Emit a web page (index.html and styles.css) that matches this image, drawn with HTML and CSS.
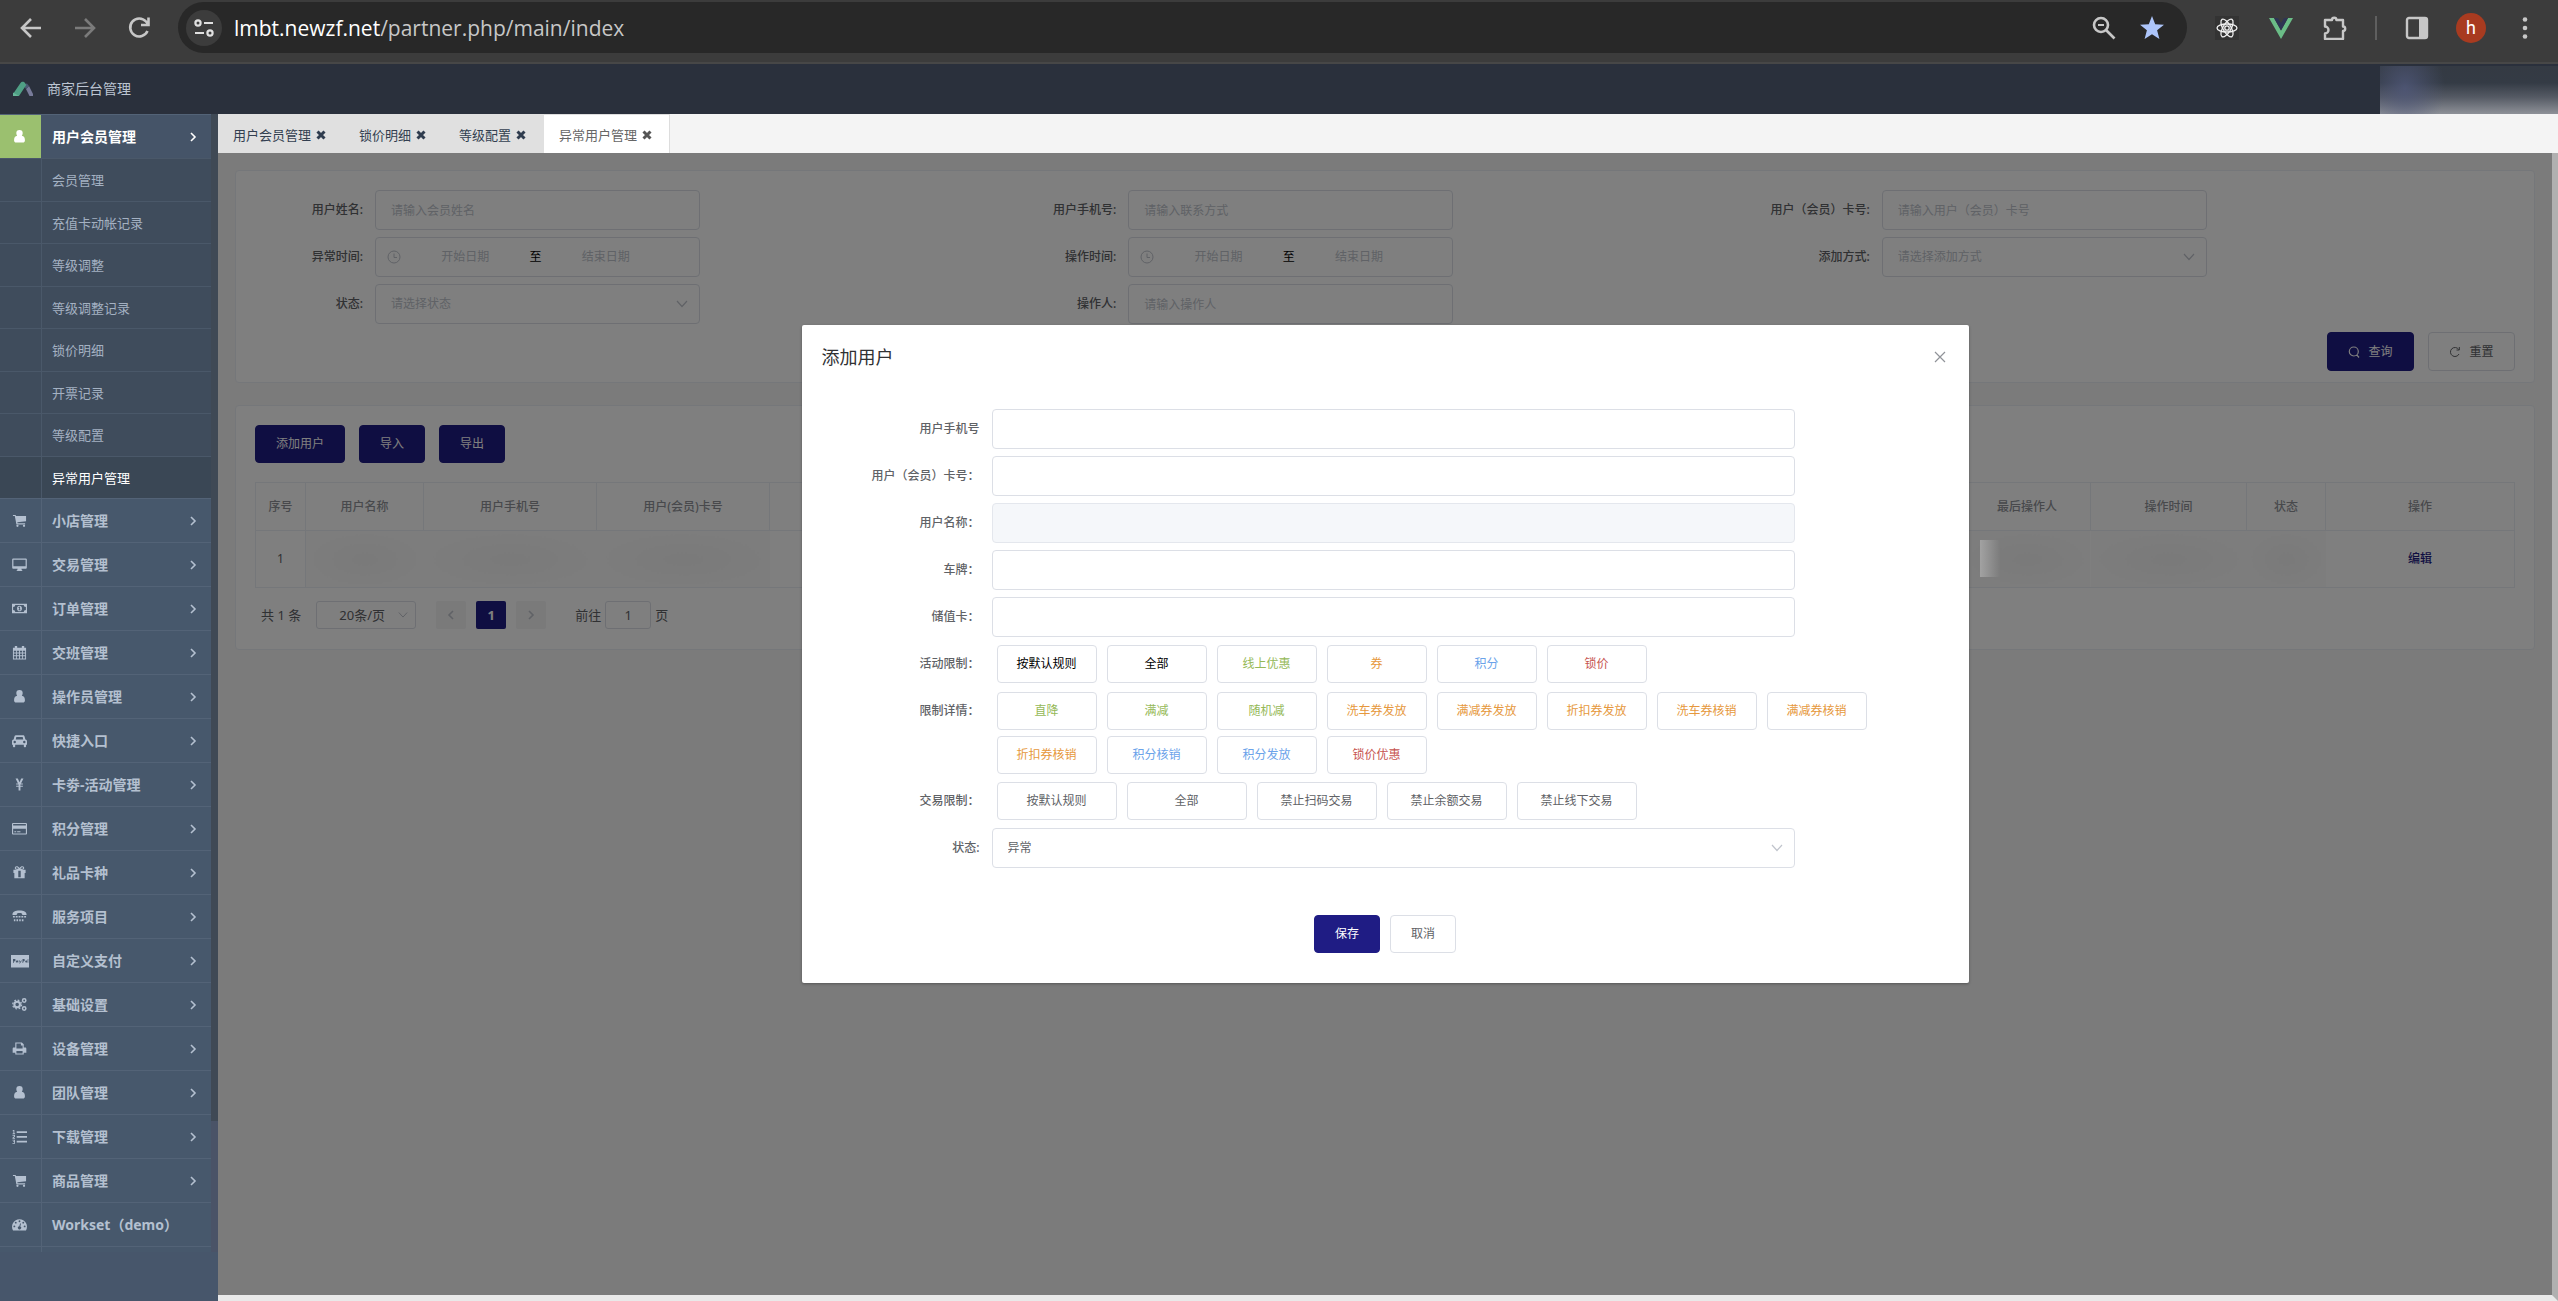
FILE: index.html
```html
<!DOCTYPE html>
<html lang="zh-CN">
<head>
<meta charset="utf-8">
<title>商家后台管理</title>
<link rel="stylesheet" href="styles.css">
</head>
<body>
<svg class="sprite" aria-hidden="true">
  <symbol id="i-user" viewBox="0 0 16 16"><path d="M8 1a3.4 3.4 0 0 1 3.4 3.6c0 1-.3 1.9-.9 2.6 2.2.2 3.3 2 3.3 4.8 0 1.500-.9 2.500-2.300 2.500h-7c-1.400 0-2.300-1-2.300-2.500 0-2.800 1.100-4.600 3.300-4.800a4 4 0 0 1-.9-2.600A3.400 3.400 0 0 1 8 1z"/></symbol>
  <symbol id="i-cart" viewBox="0 0 16 16"><path d="M1 2h2.800l.5 1.300H15v5.400L5.700 9.900l.2 1H14v1.300H4.700L3 3.300H1z"/><circle cx="5.800" cy="13.600" r="1.200"/><circle cx="12.800" cy="13.600" r="1.200"/></symbol>
  <symbol id="i-desktop" viewBox="0 0 16 16"><path fill-rule="evenodd" d="M1.200 1.500h13.600c.6 0 1 .4 1 1v9c0 .6-.4 1-1 1H10l.5 1.500h.5v1H5v-1h.5l.5-1.500H1.200c-.6 0-1-.4-1-1v-9c0-.6.4-1 1-1zm.3 1.300v7h13v-7z"/></symbol>
  <symbol id="i-money" viewBox="0 0 16 16"><path fill-rule="evenodd" d="M0 3h16v10H0zm3.500 1.200A2.300 2.300 0 0 1 1.200 6.500v3a2.300 2.300 0 0 1 2.300 2.300h9a2.300 2.300 0 0 1 2.300-2.300v-3a2.300 2.300 0 0 1-2.300-2.300z"/><path fill-rule="evenodd" d="M8 5a2.600 3 0 1 1 0 6 2.600 3 0 0 1 0-6zM7 6.500v1h.7V9H7v.8h2V9h-.4V6.100h-.7z"/></symbol>
  <symbol id="i-cal" viewBox="0 0 16 16"><path fill-rule="evenodd" d="M1 3h2V1h2.500v2h5V1H13v2h2v12.500H1zm1 3v2h2.300V6zm3.200 0v2h2.300V6zm3.300 0v2h2.300V6zm3.200 0v2H14V6zM2 9v2h2.300V9zm3.200 0v2h2.300V9zm3.300 0v2h2.300V9zm3.200 0v2H14V9zM2 12v2.500h2.300V12zm3.200 0v2.500h2.300V12zm3.300 0v2.500h2.300V12zm3.200 0v2.500H14V12z"/></symbol>
  <symbol id="i-car" viewBox="0 0 16 16"><path fill-rule="evenodd" d="M4.300 2.500h7.400c.9 0 1.500.4 1.700 1.200l.9 3.200c1 .2 1.700.9 1.700 2v3.600h-1V14c0 .7-.5 1.200-1.200 1.200s-1.200-.5-1.200-1.200v-1.500H3.400V14c0 .7-.5 1.200-1.200 1.200S1 14.700 1 14v-1.500H0V8.900c0-1.100.7-1.800 1.700-2l.9-3.200c.2-.8.8-1.200 1.700-1.200zm.3 1.700L4 6.800h8l-.6-2.600zM2.900 8.300a1.300 1.300 0 1 0 0 2.600 1.300 1.300 0 0 0 0-2.600zm10.200 0a1.300 1.300 0 1 0 0 2.600 1.300 1.300 0 0 0 0-2.600z"/></symbol>
  <symbol id="i-yen" viewBox="0 0 16 16"><path d="M3.800 1.500h2.400L8 5.600l1.800-4.100h2.400L9.600 6.900h2v1.200H9v1.200h2.600v1.200H9v4H7v-4H4.400V9.300H7V8.100H4.400V6.900h2z"/></symbol>
  <symbol id="i-credit" viewBox="0 0 16 16"><path fill-rule="evenodd" d="M1.300 2h13.400c.7 0 1.300.6 1.300 1.300v9.900c0 .7-.6 1.300-1.300 1.300H1.300c-.7 0-1.300-.6-1.300-1.300V3.300C0 2.600.6 2 1.300 2zM1.200 3.200v1.500h13.600V3.200zm0 5v5.100h13.600V8.200zM2.500 11h2v1h-2zm3 0H9v1H5.500z"/></symbol>
  <symbol id="i-gift" viewBox="0 0 16 16"><path fill-rule="evenodd" d="M1.500 5h4.300C3.700 5 3 4 3 3.100 3 2 3.800 1.200 5 1.200c1.300 0 2 .7 3 2.100 1-1.400 1.700-2.100 3-2.100 1.200 0 2 .8 2 1.900 0 .9-.7 1.900-2.800 1.900h4.300v3.500h-1V14H2.500V8.500h-1zM5 2.300c-.6 0-1 .3-1 .8s.4.900 1 .9h2.100C6.300 2.900 5.800 2.300 5 2.300zm6 0c-.8 0-1.300.6-2.100 1.700H11c.6 0 1-.4 1-.9s-.4-.8-1-.8zM6.700 6v7h2.600V6z"/></symbol>
  <symbol id="i-tty" viewBox="0 0 16 16"><path d="M8 1.500c4.500 0 7.500 1.700 7.500 4v1h-4.600v-1c0-.8-1.300-1.200-2.900-1.200s-2.900.4-2.900 1.200v1H.5v-1c0-2.300 3-4 7.500-4zM1 7.500h2V9H1zm3 0h2V9H4zm3 0h2V9H7zm3 0h2V9h-2zm3 0h2V9h-2zM2 11h1.600v2H2zm2.800 0h1.700v2H4.800zm2.900 0h1.600v2H7.700zm2.800 0h1.700v2h-1.700z"/></symbol>
  <symbol id="i-paypal" viewBox="0 0 20 16"><path fill-rule="evenodd" d="M1 2h18v12.500H1zM3 6v4h.7V8.500C6 8.500 6 6 4.700 6zm4 1.500c-1.800 0-1.500 2.500 0 2 .5-.1.700-.4.700-.4v.4h.6v-2zm2 0 .8 2-.6 1.100h.7L12 7.500h-.7l-.8 1.200-.6-1.200zM12.500 6v4h.7V8.500c2 0 2-2.500.7-2.500zm3.800 1.500c-1.500 0-1.500 2.200 0 2h.9v-2zM17.700 6v3.700h.6V6z"/></symbol>
  <symbol id="i-cogs" viewBox="0 0 16 16"><circle cx="5.500" cy="8" r="3" fill="none" stroke="currentColor" stroke-width="2.200"/><circle cx="5.500" cy="8" r="4.700" fill="none" stroke="currentColor" stroke-width="1.400" stroke-dasharray="1.850 1.840"/><circle cx="13" cy="3.700" r="1.800" fill="none" stroke="currentColor" stroke-width="1.600"/><circle cx="13" cy="12.300" r="1.800" fill="none" stroke="currentColor" stroke-width="1.600"/></symbol>
  <symbol id="i-print" viewBox="0 0 16 16"><path fill-rule="evenodd" d="M3.500 1.500h7l2 2V7H14c.8 0 1.300.5 1.300 1.300v4.200h-2.800v2h-9v-2H.7V8.300C.7 7.500 1.200 7 2 7h1.500zm1.200 1.200V8h6.600V4.700H9.500v-2zm0 8v2.600h6.600v-2.600z"/></symbol>
  <symbol id="i-list" viewBox="0 0 16 16"><path d="M5 2.500h11v1.800H5zm0 5h11v1.800H5zm0 5h11v1.800H5zM1.500 1h1v3.500h.8v.8H.7v-.8h.8V2L.7 2.400v-.8zM.5 6.200h2.700v2L1.700 9.500h1.500v.8H.5v-.9l1.800-1.700v-.6H.5zm0 5.200h2.700v4.200H.5v-.8h1.800v-1h-1v-.7h1v-.9H.5z"/></symbol>
  <symbol id="i-dash" viewBox="0 0 16 16"><path fill-rule="evenodd" d="M8 2.500a8 8 0 0 1 6.900 12H1.100A8 8 0 0 1 8 2.500zM8 3.500a1 1 0 1 0 0 2 1 1 0 0 0 0-2zM4 5a1 1 0 1 0 0 2 1 1 0 0 0 0-2zm8 0a1 1 0 1 0 0 2 1 1 0 0 0 0-2zM2.500 9a1 1 0 1 0 0 2 1 1 0 0 0 0-2zm11 0a1 1 0 1 0 0 2 1 1 0 0 0 0-2zM8.600 6.800l-.8 3a1.700 1.700 0 1 0 1 .2l.8-3z"/></symbol>
  <symbol id="i-right" viewBox="0 0 8 10"><path d="M2 1l4 4-4 4" fill="none" stroke="currentColor" stroke-width="1.600"/></symbol>
  <symbol id="i-left" viewBox="0 0 8 10"><path d="M6 1L2 5l4 4" fill="none" stroke="currentColor" stroke-width="1.600"/></symbol>
  <symbol id="i-down" viewBox="0 0 12 8"><path d="M1 1l5 5.500L11 1" fill="none" stroke="currentColor" stroke-width="1.200"/></symbol>
  <symbol id="i-x" viewBox="0 0 10 10"><path d="M1.500 1.500l7 7m0-7l-7 7" fill="none" stroke="currentColor" stroke-width="3"/></symbol>
  <symbol id="i-close" viewBox="0 0 12 12"><path d="M1 1l10 10M11 1L1 11" fill="none" stroke="currentColor" stroke-width="1.200"/></symbol>
  <symbol id="i-clock" viewBox="0 0 14 14"><path d="M7 1a6 6 0 1 1 0 12A6 6 0 0 1 7 1zm0 2.500V7.500h3" fill="none" stroke="currentColor"/></symbol>
  <symbol id="i-search" viewBox="0 0 12 12"><path d="M5.800 1a4.500 4.500 0 1 1 0 9 4.500 4.500 0 0 1 0-9zm3 7.800L11 11.500" fill="none" stroke="currentColor" stroke-width="1.200"/></symbol>
  <symbol id="i-refresh" viewBox="0 0 12 12"><path d="M10 8a4.500 4.500 0 1 1-.3-4.500M10.300 1v3H7.500" fill="none" stroke="currentColor"/></symbol>
</svg>

<div class="browser">
  <button class="nav-btn" aria-label="后退"><svg viewBox="0 0 24 24"><path d="M22 12H3m9-9l-9 9 9 9" fill="none" stroke="#c7c7c7" stroke-width="2.600"/></svg></button>
  <button class="nav-btn" aria-label="前进"><svg viewBox="0 0 24 24"><path d="M2 12h19m-9-9l9 9-9 9" fill="none" stroke="#7b7b7b" stroke-width="2.600"/></svg></button>
  <button class="nav-btn" aria-label="刷新"><svg viewBox="0 0 24 24"><path d="M20.500 15a9 9 0 1 1-1.500-9.500l2 2.500M21.500 1.500v7.500H14" fill="none" stroke="#c7c7c7" stroke-width="2.600"/></svg></button>
  <div class="omnibox">
    <span class="site-info"><svg viewBox="0 0 20 18"><g fill="none" stroke="#e0e0e0" stroke-width="2.200"><circle cx="4" cy="4" r="2.600"/><path d="M10 4h9M1 14h9"/><circle cx="16" cy="14" r="2.600"/></g></svg></span>
    <span class="url"><b>lmbt.newzf.net</b>/partner.php/main/index</span>
    <svg class="ic24" viewBox="0 0 24 24"><g fill="none" stroke="#c7c7c7" stroke-width="2.600"><circle cx="9" cy="9" r="7"/><path d="M14 14l8.500 8.500"/><path d="M6 9h6" stroke-width="2"/></g></svg>
    <svg class="star" viewBox="0 0 26 26"><path fill="#adc5fa" d="M13 1l3.200 8.300 8.800.5-6.900 5.500 2.300 8.700L13 19.200 5.600 24l2.300-8.700L1 9.800l8.800-.5z"/></svg>
  </div>
  <div class="extensions">
    <svg class="ic24" viewBox="0 0 24 24"><path fill="#333" d="M0 0h24v24H0z"/><g fill="none" stroke="#f2f2f2" stroke-width="1.300"><ellipse cx="12" cy="12" rx="10" ry="4"/><ellipse cx="12" cy="12" rx="10" ry="4" transform="rotate(60 12 12)"/><ellipse cx="12" cy="12" rx="10" ry="4" transform="rotate(120 12 12)"/><circle cx="12" cy="12" r="2.200"/></g></svg>
    <svg class="ic24" viewBox="0 0 24 24"><path fill="#6bbd87" d="M0 2h5l7 12.500L19 2h5L12 23z"/><path fill="#2e3453" d="M5 2h4l3 5 3-5h4l-7 12.500z"/></svg>
    <svg class="ic24" viewBox="0 0 24 24"><path fill="none" stroke="#c7c7c7" stroke-width="2.400" stroke-linejoin="round" d="M2 4h7a2.200 2.200 0 0 1 4.400 0H20v6.500a2.200 2.200 0 0 1 0 4.400V23H2v-5.500a3 3 0 0 0 0-7z"/></svg>
    <span class="sep"></span>
    <svg class="ic24" viewBox="0 0 24 24"><rect x="2" y="2" width="20" height="20" rx="2" fill="none" stroke="#c7c7c7" stroke-width="2.400"/><path fill="#c7c7c7" d="M14 2h8v20h-8z"/></svg>
    <span class="avatar">h</span>
    <svg class="ic24" viewBox="0 0 24 24"><g fill="#c7c7c7"><circle cx="12" cy="3.500" r="2.300"/><circle cx="12" cy="12" r="2.300"/><circle cx="12" cy="20.500" r="2.300"/></g></svg>
  </div>
</div>

<header class="topbar">
  <svg class="logo" viewBox="0 0 22 16"><path fill="#777a99" d="M14 8l3-3 4 8v2h-3.500z"/><path fill="#4b5a74" d="M13 3l2-.5L17 5l-3 3-2-2.500z"/><path fill="#4f9f85" d="M8.500 2c1-1.600 3.500-1.600 4.500 0l1.200 2L7 15H1v-2z"/><path fill="#67b79a" d="M1 11.500L7 15H1z"/></svg>
  <h1>商家后台管理</h1>
  <div class="account"></div>
</header>

<div class="shell">
  <aside class="sidebar">
    <nav class="menu">
      <a class="item open" href="#"><span class="ico"><svg><use href="#i-user"/></svg></span><span>用户会员管理</span><svg class="chev"><use href="#i-right"/></svg></a>
      <div class="sub">
        <a href="#">会员管理</a><a href="#">充值卡动帐记录</a><a href="#">等级调整</a><a href="#">等级调整记录</a><a href="#">锁价明细</a><a href="#">开票记录</a><a href="#">等级配置</a><a class="current" href="#">异常用户管理</a>
      </div>
      <a class="item" href="#"><span class="ico"><svg><use href="#i-cart"/></svg></span><span>小店管理</span><svg class="chev"><use href="#i-right"/></svg></a>
      <a class="item" href="#"><span class="ico"><svg><use href="#i-desktop"/></svg></span><span>交易管理</span><svg class="chev"><use href="#i-right"/></svg></a>
      <a class="item" href="#"><span class="ico"><svg><use href="#i-money"/></svg></span><span>订单管理</span><svg class="chev"><use href="#i-right"/></svg></a>
      <a class="item" href="#"><span class="ico"><svg><use href="#i-cal"/></svg></span><span>交班管理</span><svg class="chev"><use href="#i-right"/></svg></a>
      <a class="item" href="#"><span class="ico"><svg><use href="#i-user"/></svg></span><span>操作员管理</span><svg class="chev"><use href="#i-right"/></svg></a>
      <a class="item" href="#"><span class="ico"><svg><use href="#i-car"/></svg></span><span>快捷入口</span><svg class="chev"><use href="#i-right"/></svg></a>
      <a class="item" href="#"><span class="ico"><svg><use href="#i-yen"/></svg></span><span>卡劵-活动管理</span><svg class="chev"><use href="#i-right"/></svg></a>
      <a class="item" href="#"><span class="ico"><svg><use href="#i-credit"/></svg></span><span>积分管理</span><svg class="chev"><use href="#i-right"/></svg></a>
      <a class="item" href="#"><span class="ico"><svg><use href="#i-gift"/></svg></span><span>礼品卡种</span><svg class="chev"><use href="#i-right"/></svg></a>
      <a class="item" href="#"><span class="ico"><svg><use href="#i-tty"/></svg></span><span>服务项目</span><svg class="chev"><use href="#i-right"/></svg></a>
      <a class="item" href="#"><span class="ico"><svg class="wide"><use href="#i-paypal"/></svg></span><span>自定义支付</span><svg class="chev"><use href="#i-right"/></svg></a>
      <a class="item" href="#"><span class="ico"><svg><use href="#i-cogs"/></svg></span><span>基础设置</span><svg class="chev"><use href="#i-right"/></svg></a>
      <a class="item" href="#"><span class="ico"><svg><use href="#i-print"/></svg></span><span>设备管理</span><svg class="chev"><use href="#i-right"/></svg></a>
      <a class="item" href="#"><span class="ico"><svg><use href="#i-user"/></svg></span><span>团队管理</span><svg class="chev"><use href="#i-right"/></svg></a>
      <a class="item" href="#"><span class="ico"><svg><use href="#i-list"/></svg></span><span>下载管理</span><svg class="chev"><use href="#i-right"/></svg></a>
      <a class="item" href="#"><span class="ico"><svg><use href="#i-cart"/></svg></span><span>商品管理</span><svg class="chev"><use href="#i-right"/></svg></a>
      <a class="item" href="#"><span class="ico"><svg><use href="#i-dash"/></svg></span><span>Workset（demo）</span></a>
      <div class="menu-end"></div>
    </nav>
    <div class="track"><div class="thumb"></div></div>
  </aside>

  <div class="content">
    <nav class="tabs">
      <a href="#">用户会员管理<svg><use href="#i-x"/></svg></a>
      <a href="#">锁价明细<svg><use href="#i-x"/></svg></a>
      <a href="#">等级配置<svg><use href="#i-x"/></svg></a>
      <a class="active" href="#">异常用户管理<svg><use href="#i-x"/></svg></a>
    </nav>
    <div class="frame">
      <main class="page">
        <section class="card filters">
          <form class="filter-grid">
            <div class="field"><label for="f1">用户姓名:</label><input id="f1" class="box" placeholder="请输入会员姓名"></div>
            <div class="field"><label for="f2">用户手机号:</label><input id="f2" class="box" placeholder="请输入联系方式"></div>
            <div class="field"><label for="f3">用户（会员）卡号:</label><input id="f3" class="box" placeholder="请输入用户（会员）卡号"></div>
            <div class="field"><label for="f4">异常时间:</label><div class="box range"><svg><use href="#i-clock"/></svg><input id="f4" placeholder="开始日期"><span>至</span><input aria-label="结束日期" placeholder="结束日期"></div></div>
            <div class="field"><label for="f5">操作时间:</label><div class="box range"><svg><use href="#i-clock"/></svg><input id="f5" placeholder="开始日期"><span>至</span><input aria-label="结束日期" placeholder="结束日期"></div></div>
            <div class="field"><label for="f6">添加方式:</label><div class="pick"><select id="f6" class="box empty"><option>请选择添加方式</option></select><svg><use href="#i-down"/></svg></div></div>
            <div class="field"><label for="f7">状态:</label><div class="pick"><select id="f7" class="box empty"><option>请选择状态</option></select><svg><use href="#i-down"/></svg></div></div>
            <div class="field"><label for="f8">操作人:</label><input id="f8" class="box" placeholder="请输入操作人"></div>
          </form>
          <div class="filter-actions">
            <button class="btn primary"><svg><use href="#i-search"/></svg>查询</button>
            <button class="btn"><svg><use href="#i-refresh"/></svg>重置</button>
          </div>
        </section>

        <section class="card">
          <div class="toolbar"><button class="btn primary">添加用户</button><button class="btn primary">导入</button><button class="btn primary">导出</button></div>
          <table>
            <colgroup><col class="w50"><col class="w118"><col class="w173"><col class="w173"><col><col class="w127"><col class="w156"><col class="w79"><col class="w189"></colgroup>
            <thead><tr><th>序号</th><th>用户名称</th><th>用户手机号</th><th>用户(会员)卡号</th><th></th><th>最后操作人</th><th>操作时间</th><th>状态</th><th>操作</th></tr></thead>
            <tbody><tr><td>1</td><td class="mask"></td><td class="mask"></td><td class="mask"></td><td></td><td class="mask late"></td><td class="mask"></td><td class="mask"></td><td><a href="#">编辑</a></td></tr></tbody>
          </table>
          <div class="pager">
            <span class="total">共 1 条</span>
            <div class="pick"><select aria-label="每页条数"><option>20条/页</option></select><svg><use href="#i-down"/></svg></div>
            <div class="pages">
              <button aria-label="上一页"><svg><use href="#i-left"/></svg></button><button class="on">1</button><button aria-label="下一页"><svg><use href="#i-right"/></svg></button>
            </div>
            <label for="jump">前往</label><input id="jump" value="1"><span>页</span>
          </div>
        </section>
      </main>

      <div class="overlay">
        <section class="dialog" role="dialog" aria-labelledby="dlg">
          <header><h2 id="dlg">添加用户</h2><button class="close" aria-label="关闭"><svg><use href="#i-close"/></svg></button></header>
          <form class="dialog-form">
            <div class="row"><label for="d1">用户手机号</label><input id="d1" class="box"></div>
            <div class="row"><label for="d2">用户（会员）卡号：</label><input id="d2" class="box"></div>
            <div class="row"><label for="d3">用户名称：</label><input id="d3" class="box" disabled></div>
            <div class="row"><label for="d4">车牌：</label><input id="d4" class="box"></div>
            <div class="row"><label for="d5">储值卡：</label><input id="d5" class="box"></div>
            <div class="row"><span class="label">活动限制：</span><div class="tags"><button type="button" class="black">按默认规则</button><button type="button" class="black">全部</button><button type="button" class="green">线上优惠</button><button type="button" class="orange">券</button><button type="button" class="blue">积分</button><button type="button" class="red">锁价</button></div></div>
            <div class="row"><span class="label">限制详情：</span><div class="tags multi"><button type="button" class="green">直降</button><button type="button" class="green">满减</button><button type="button" class="green">随机减</button><button type="button" class="orange">洗车券发放</button><button type="button" class="orange">满减券发放</button><button type="button" class="orange">折扣券发放</button><button type="button" class="orange">洗车券核销</button><button type="button" class="orange">满减券核销</button><button type="button" class="orange">折扣券核销</button><button type="button" class="blue">积分核销</button><button type="button" class="blue">积分发放</button><button type="button" class="red">锁价优惠</button></div></div>
            <div class="row"><span class="label">交易限制：</span><div class="tags large"><button type="button">按默认规则</button><button type="button">全部</button><button type="button">禁止扫码交易</button><button type="button">禁止余额交易</button><button type="button">禁止线下交易</button></div></div>
            <div class="row"><label for="d6">状态:</label><div class="pick"><select id="d6" class="box"><option>异常</option></select><svg><use href="#i-down"/></svg></div></div>
          </form>
          <footer><button class="btn primary">保存</button><button class="btn">取消</button></footer>
        </section>
      </div>
    </div>
  </div>
</div>
</body>
</html>
```

FILE: styles.css
```css
* { box-sizing: border-box; }
body { margin: 0; min-height: 100vh; display: flex; flex-direction: column; font: 12px/20px "Noto Sans", "Noto Sans CJK SC", sans-serif; color: #606266; }
button, input, select { font: inherit; color: inherit; margin: 0; }
button { cursor: pointer; }
a { text-decoration: none; color: inherit; }
h1, h2 { margin: 0; font-weight: 400; }
svg { display: block; fill: currentColor; }
.sprite { position: absolute; width: 0; height: 0; }

/* browser bar */
.browser { height: 64px; background: #3c3c3c; border-bottom: 2px solid #474747; padding: 2px 21px 9px 19px; display: flex; align-items: center; }
.nav-btn { width: 24px; height: 24px; margin-right: 30px; padding: 0; border: 0; background: none; }
.nav-btn svg { width: 24px; height: 24px; }
.nav-btn:nth-of-type(3) { margin-right: 27px; }
.omnibox { flex: 1; height: 51px; border-radius: 26px; background: #282828; display: flex; align-items: center; padding: 0 22px 0 8px; }
.site-info { width: 36px; height: 36px; border-radius: 50%; background: #3c3c3c; display: grid; place-items: center; }
.site-info svg { width: 20px; height: 18px; }
.url { flex: 1; margin-left: 12px; font: 21px/32px "Open Sans", sans-serif; color: #c7c7c7; }
.url b { font-weight: 400; color: #fff; }
.ic24 { width: 24px; height: 24px; }
.star { width: 26px; height: 26px; margin-left: 23px; }
.extensions { display: flex; align-items: center; gap: 30px; margin-left: 28px; }
.sep { width: 2px; height: 24px; background: #5f5f5f; margin: 0 -2px; }
.avatar { width: 30px; height: 30px; border-radius: 50%; background: #a83b20; color: #fff; text-align: center; font: 18px/30px Roboto, sans-serif; margin: 0 -3px; }

/* application header */
.topbar { height: 50px; background: #2a303c; display: flex; align-items: center; padding-left: 12px; color: #bcc5d2; }
.logo { width: 22px; height: 16px; }
h1 { font-size: 14px; margin-left: 13px; flex: 1; }
.account { width: 178px; height: 48px; align-self: flex-end; background: radial-gradient(ellipse 40px 50px at 25px 22px, rgba(80, 88, 122, .8) 0, transparent 100%), linear-gradient(#343a43 0, #343b45 35%, #555a64 65%, #8e9198 100%); }

.shell { flex: 1; display: flex; }

/* sidebar */
.sidebar { width: 218px; background: #47566b; display: flex; align-items: flex-start; }
.menu { flex: 1; background: linear-gradient(90deg, transparent 41px, #536377 41px, #536377 42px, transparent 42px) #47586c; color: #b4c0d0; }
.item { height: 44px; border-top: 1px solid #536377; display: flex; align-items: center; font-size: 14px; font-weight: 700; padding-right: 14px; }
.ico { width: 41px; display: grid; place-items: center; margin-right: 11px; padding-right: 2px; }
.ico svg { width: 15px; height: 15px; }
.ico svg.wide { width: 20px; height: 16px; }
.chev { width: 8px; height: 10px; margin-left: auto; }
.open { background: #455468; color: #fff; }
.open .ico { height: 43px; background: #9bc06f; }
.sub { display: grid; grid-auto-rows: 43px 42px; font-size: 13px; color: #a4b1c2; }
.sub a { display: flex; align-items: center; padding-left: 52px; border-top: 1px solid #4a5869; background: linear-gradient(90deg, transparent 41px, #4a5869 41px, #4a5869 42px, transparent 42px) #3f4c5c; }
.sub .current { background-color: #3a4755; color: #fff; }
.menu-end { height: 6px; border-top: 1px solid #536377; }
.track { width: 7px; align-self: stretch; max-height: 1138px; background: #4a5367; }
.thumb { height: 1007px; background: #3f4955; }

/* tab strip */
.content { flex: 1; min-width: 0; display: flex; flex-direction: column; }
.tabs { height: 39px; background: #f4f4f4; display: flex; font-size: 13px; color: #333f50; }
.tabs a { background: #e0e0e0; display: flex; align-items: center; padding: 2px 18px 0 15px; gap: 5px; }
.tabs svg { width: 10px; height: 10px; color: #2f3c4e; }
.tabs .active { background: #fff; color: #666; padding-right: 17px; border-right: 1px solid #ddd; border-top: 1px solid #ddd; }
.tabs .active svg { color: #555; }

/* framed page */
.frame { flex: 1; position: relative; background: #f6f6f6; border: solid; border-width: 0 6px 6px 0; border-color: #b0b0b0 #b0b0b0 #e9e9e9; }
.page { padding: 17px; display: flex; flex-direction: column; gap: 22px; }
.card { background: #fff; border: 1px solid #ebeef5; border-radius: 4px; padding: 19px; }
.filters { padding-bottom: 11px; }
.filter-grid { display: grid; grid-template-columns: repeat(3, 1fr); gap: 7px 0; }
.field { display: flex; }
.field label { width: 120px; padding-right: 12px; text-align: right; line-height: 40px; font-weight: 500; white-space: nowrap; }
.field > .box, .field > .pick { width: 325px; }
.box { height: 40px; border: 1px solid #dcdfe6; border-radius: 4px; background: #fff; padding: 0 15px; outline: 0; }
::placeholder { color: #c0c4cc; opacity: 1; }
.range { display: flex; align-items: center; padding: 0 29px 0 11px; color: #c0c4cc; }
.range svg { width: 14px; height: 14px; }
.range input { flex: 1; min-width: 0; border: 0; padding: 0; text-align: center; background: none; }
.range span { color: #000; }
.pick { position: relative; }
.pick select { width: 100%; appearance: none; }
.pick svg { position: absolute; right: 12px; top: 50%; width: 12px; height: 8px; margin-top: -4px; color: #c0c4cc; pointer-events: none; }
.empty { color: #c0c4cc; }
.filter-actions { display: flex; justify-content: flex-end; gap: 14px; margin-top: 8px; }
.filter-actions .btn { width: 87px; height: 39px; }
.btn { height: 38px; padding: 0 20px; border: 1px solid #dcdfe6; border-radius: 4px; background: #fff; display: flex; align-items: center; justify-content: center; gap: 8px; white-space: nowrap; }
.btn svg { width: 12px; height: 12px; }
.primary { background: #1f1c84; border-color: #1f1c84; color: #fff; }
.toolbar { display: flex; gap: 14px; }

table { width: 100%; margin-top: 19px; border-collapse: collapse; table-layout: fixed; text-align: center; }
th, td { border: 1px solid #ebeef5; padding: 0; }
th { height: 48px; color: #909399; font-weight: 500; }
td { height: 57px; }
td a { color: #1f1c84; font-weight: 500; }
.w50 { width: 50px; } .w118 { width: 118px; } .w127 { width: 127px; } .w156 { width: 156px; } .w173 { width: 173px; } .w79 { width: 79px; } .w189 { width: 189px; }

/* redacted cells */
.mask { border-left-color: transparent; border-right-color: transparent; background: radial-gradient(ellipse at 50% 50%, #f4f4f4 0, #fafafa 70%); }
.late { position: relative; }
.late::before { content: ""; position: absolute; z-index: 1; left: 16px; top: 9px; width: 20px; height: 37px; background: linear-gradient(90deg, #a2a2a2, #7c7c7c); }

.pager { display: flex; align-items: center; margin-top: 11px; padding-left: 6px; height: 31px; font-size: 13px; }
.pager .pick { width: 100px; margin-left: 15px; }
.pager select, #jump { height: 28px; border: 1px solid #dcdfe6; border-radius: 3px; background: #fff; text-align: center; padding: 0 24px 0 16px; }
.pager .pick svg { right: 8px; width: 10px; }
.pages { display: flex; gap: 10px; margin: 0 29px 0 20px; }
.pages button { width: 30px; height: 28px; padding: 0; border: 0; border-radius: 2px; background: #f4f4f5; display: grid; place-items: center; color: #c0c4cc; }
.pages svg { width: 8px; height: 10px; }
.pages .on { background: #1f1c84; color: #fff; font-weight: 700; }
#jump { width: 46px; padding: 0; margin: 0 4px; }

/* dialog */
.overlay { position: absolute; inset: 0; background: rgba(0, 0, 0, .5); padding-top: 172px; }
.dialog { width: 50%; margin: 0 auto; background: #fff; border-radius: 2px; box-shadow: 0 1px 3px rgba(0, 0, 0, .3); padding: 20px 20px 30px; }
.dialog header { display: flex; justify-content: space-between; align-items: center; height: 24px; }
h2 { font-size: 18px; line-height: 24px; color: #303133; }
.close { border: 0; background: none; padding: 3px; color: #909399; }
.close svg { width: 12px; height: 12px; }
.dialog-form { margin-top: 40px; display: flex; flex-direction: column; gap: 7px; }
.row { display: flex; }
.row label, .row .label { width: 170px; flex: none; padding-right: 12px; text-align: right; line-height: 40px; font-weight: 500; white-space: nowrap; }
.row > .box, .row > .pick { width: 803px; }
.box:disabled { background: #f5f7fa; border-color: #e4e7ed; }
.tags { flex: 1; display: flex; flex-wrap: wrap; gap: 6px 10px; padding: 1px 0 1px 5px; }
.multi { padding-bottom: 0; }
.tags button { width: 100px; height: 38px; padding: 0; border: 1px solid #dcdfe6; border-radius: 4px; background: #fff; white-space: nowrap; }
.tags.large button { width: 120px; }
.tags .black { color: #000; }
.tags .green { color: #95b957; }
.tags .orange { color: #e6983c; }
.tags .blue { color: #6ba3ea; }
.tags .red { color: #c75450; }
.dialog footer { display: flex; justify-content: center; gap: 10px; margin-top: 47px; }
```
